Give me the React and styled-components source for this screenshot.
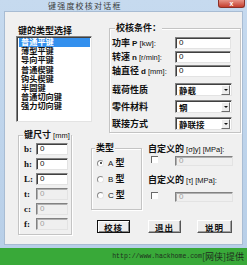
import React from "react";
import styled, { createGlobalStyle } from "styled-components";

const GlobalStyle = createGlobalStyle`
  html, body {
    margin: 0;
    padding: 0;
    background: #ffffff;
  }
  body {
    font-family: "Noto Sans CJK SC", "Liberation Sans", sans-serif;
  }
  * {
    box-sizing: border-box;
  }
`;

const Screen = styled.div`
  width: 247px;
  height: 265px;
  display: flex;
  flex-direction: column;
  overflow: hidden;
`;

const Frame = styled.div`
  height: 248px;
  background: linear-gradient(#c6daef, #b8cfe8);
  padding: 0 4px 3px 4px;
  display: flex;
  flex-direction: column;
`;

const TitleBar = styled.div`
  height: 11px;
  display: flex;
  align-items: flex-start;
`;

const Title = styled.div`
  flex: 1;
  padding-left: 44px;
  font-size: 8px;
  line-height: 11px;
  letter-spacing: 1.2px;
  color: #3a3a3a;
`;

const CloseButton = styled.div`
  width: 27px;
  height: 8px;
  margin-right: -2px;
  background: linear-gradient(#e79488, #c43e2e);
  border: 1px solid #8c3026;
  border-top: none;
  border-radius: 0 0 3px 3px;
  display: flex;
  align-items: center;
  justify-content: center;
  color: #ffffff;
  font-family: "Liberation Sans", sans-serif;
  font-size: 7px;
  font-weight: bold;
  line-height: 7px;
`;

const Body = styled.div`
  flex: 1;
  background: #f0f0f0;
  border: 1px solid #a8bcd3;
  padding: 13px 0 0 11px;
  display: flex;
  flex-direction: column;
`;

const TopRow = styled.div`
  display: flex;
  align-items: flex-start;
`;

const LeftColumn = styled.div`
  width: 76px;
  display: flex;
  flex-direction: column;
`;

const Caption = styled.div`
  font-size: 9px;
  font-weight: bold;
  line-height: 11px;
  color: #111;
  margin-left: ${(p) => p.$indent || 0}px;
  margin-top: ${(p) => p.$top || 0}px;
  white-space: nowrap;
`;

const Latin = styled.span`
  font-family: "Liberation Sans", sans-serif;
  font-size: ${(p) => p.$size || 8}px;
  font-weight: ${(p) => (p.$light ? "normal" : "bold")};
`;

const ListBox = styled.div`
  height: 86px;
  background: #ffffff;
  border: 1px solid;
  border-color: #828282 #e3e3e3 #e3e3e3 #828282;
  box-shadow: inset 1px 1px 0 #404040;
  padding: 1px 1px 1px 2px;
`;

const ListItem = styled.div`
  height: 9.2px;
  line-height: 9.2px;
  padding-left: 2px;
  font-family: "Liberation Sans", "Noto Sans CJK SC", sans-serif;
  font-size: 8.2px;
  font-weight: bold;
  color: ${(p) => (p.$selected ? "#ffffff" : "#111")};
  background: ${(p) => (p.$selected ? "#3390ee" : "transparent")};
  white-space: nowrap;
`;

const Group = styled.div`
  position: relative;
  width: ${(p) => p.$w}px;
  height: ${(p) => (p.$h ? `${p.$h}px` : "auto")};
  margin-left: ${(p) => p.$ml || 0}px;
  margin-top: ${(p) => p.$mt || 0}px;
  border: 1px solid #c4c4c4;
  box-shadow: inset 1px 1px 0 #ffffff, 1px 1px 0 #ffffff;
  padding: ${(p) => p.$pad};
  display: flex;
  flex-direction: column;
  align-self: start;
`;

const Legend = styled.div`
  position: absolute;
  top: -7px;
  left: ${(p) => p.$left || 4}px;
  padding: 0 1px;
  background: #f0f0f0;
  font-size: 9px;
  font-weight: bold;
  line-height: 11px;
  color: #111;
  white-space: nowrap;
`;

const FieldRow = styled.div`
  display: flex;
  align-items: center;
  height: ${(p) => p.$h}px;
  margin-top: ${(p) => p.$mt || 0}px;
`;

const FieldLabel = styled.div`
  width: ${(p) => p.$w}px;
  font-size: 9px;
  font-weight: bold;
  color: #111;
  white-space: nowrap;
  line-height: 11px;
`;

const LetterLabel = styled.div`
  width: ${(p) => p.$w}px;
  font-family: "Liberation Serif", serif;
  font-size: 9px;
  font-weight: bold;
  color: #111;
`;

const TextBox = styled.div`
  width: ${(p) => p.$w}px;
  height: ${(p) => p.$h || 12}px;
  margin-left: ${(p) => p.$ml || 0}px;
  background: ${(p) => (p.$disabled ? "#efefef" : "#ffffff")};
  border: 1px solid;
  border-color: #828282 #e3e3e3 #e3e3e3 #828282;
  box-shadow: inset 1px 1px 0 ${(p) => (p.$disabled ? "#b0b0b0" : "#404040")};
  padding-left: 3px;
  font-family: "Liberation Sans", sans-serif;
  font-size: 8px;
  line-height: ${(p) => (p.$h || 12) - 2}px;
  color: ${(p) => (p.$disabled ? "#a0a0a0" : "#111")};
`;

const SelectBox = styled.div`
  width: 57px;
  height: 13px;
  background: #ffffff;
  border: 1px solid;
  border-color: #828282 #e3e3e3 #e3e3e3 #828282;
  box-shadow: inset 1px 1px 0 #404040;
  display: flex;
  align-items: stretch;
  justify-content: space-between;
  padding: 1px 1px 0 3px;
`;

const SelectText = styled.span`
  font-size: 8.5px;
  font-weight: bold;
  line-height: 10px;
  color: #111;
`;

const ArrowButton = styled.div`
  width: 9px;
  height: 10px;
  background: #ececec;
  border: 1px solid;
  border-color: #ffffff #6c6c6c #6c6c6c #ffffff;
  display: flex;
  align-items: center;
  justify-content: center;
  &::after {
    content: "";
    border-left: 2px solid transparent;
    border-right: 2px solid transparent;
    border-top: 2px solid #111;
  }
`;

const BottomGrid = styled.div`
  display: grid;
  grid-template-columns: 73px 57px 85px;
  grid-template-rows: 79px 13px;
  row-gap: 6px;
  margin: 2px 0 0 2px;
`;

const SizeGroup = styled(Group)`
  grid-row: 1 / 3;
  gap: 3px;
`;

const RadioRow = styled.div`
  display: flex;
  align-items: center;
  height: 16px;
  gap: 4px;
`;

const RadioDot = styled.div`
  width: 7px;
  height: 7px;
  border-radius: 50%;
  background: #ffffff;
  border: 1px solid;
  border-color: #8a8a8a #e6e6e6 #e6e6e6 #8a8a8a;
  display: flex;
  align-items: center;
  justify-content: center;
  &::after {
    content: "";
    width: 2px;
    height: 2px;
    border-radius: 50%;
    background: ${(p) => (p.$checked ? "#222" : "transparent")};
  }
`;

const RadioText = styled.span`
  font-size: 9px;
  font-weight: bold;
  color: #111;
  line-height: 11px;
`;

const CustomColumn = styled.div`
  display: flex;
  flex-direction: column;
  padding-top: 8px;
`;

const CheckRow = styled.div`
  display: flex;
  align-items: center;
  height: 10px;
  margin-top: ${(p) => p.$mt || 0}px;
`;

const CheckBox = styled.div`
  width: 7px;
  height: 7px;
  margin-left: 3px;
  margin-top: -3px;
  background: #ffffff;
  border-top: 1px solid #6a6a6a;
  border-left: 1px solid #6a6a6a;
`;

const ButtonCell = styled.div`
  display: flex;
  justify-content: ${(p) => p.$justify || "flex-start"};
  padding-left: ${(p) => p.$pl || 0}px;
  padding-right: ${(p) => p.$pr || 0}px;
`;

const Button = styled.div`
  width: ${(p) => p.$w}px;
  height: 13px;
  background: #ececec;
  border: 1px solid;
  border-color: ${(p) =>
    p.$focused ? "#111 #111 #111 #111" : "#ffffff #555 #555 #ffffff"};
  box-shadow: ${(p) =>
    p.$focused ? "inset 1px 1px 0 #fff, inset -1px -1px 0 #888" : "inset -1px -1px 0 #a0a0a0"};
  display: flex;
  align-items: center;
  justify-content: center;
  font-size: 8.5px;
  font-weight: bold;
  color: #111;
  letter-spacing: 1px;
`;

const Footer = styled.div`
  flex: 1;
  background: #39a939;
  display: flex;
  align-items: center;
  justify-content: flex-end;
  padding-right: 3px;
  color: #1e2e1e;
  white-space: nowrap;
`;

const FooterUrl = styled.span`
  font-family: "Liberation Mono", monospace;
  font-size: 6.5px;
`;

const FooterCjk = styled.span`
  font-size: 9px;
`;

const keyTypes = [
  "普通平键",
  "薄型平键",
  "导向平键",
  "普通楔键",
  "钩头楔键",
  "半圆键",
  "普通切向键",
  "强力切向键",
];

const sizes = [
  { name: "b:", disabled: false },
  { name: "h:", disabled: false },
  { name: "L:", disabled: false },
  { name: "t:", disabled: true },
  { name: "c:", disabled: true },
  { name: "f:", disabled: true },
];

export default function App() {
  return (
    <Screen>
      <GlobalStyle />
      <Frame>
        <TitleBar>
          <Title>键强度校核对话框</Title>
          <CloseButton>x</CloseButton>
        </TitleBar>
        <Body>
          <TopRow>
            <LeftColumn>
              <Caption $indent={2}>键的类型选择</Caption>
              <ListBox>
                {keyTypes.map((t, i) => (
                  <ListItem key={t} $selected={i === 0}>
                    {t}
                  </ListItem>
                ))}
              </ListBox>
            </LeftColumn>
            <Group $w={132} $ml={17} $mt={3} $pad="8px 0 2px 2px">
              <Legend $left={5}>校核条件：</Legend>
              <FieldRow $h={12}>
                <FieldLabel $w={63}>
                  功率 <Latin>P</Latin> <Latin $light>[kw]:</Latin>
                </FieldLabel>
                <TextBox $w={56}>0</TextBox>
              </FieldRow>
              <FieldRow $h={12} $mt={2}>
                <FieldLabel $w={63}>
                  转速 <Latin>n</Latin> <Latin $light $size={7.5}>[r/min]:</Latin>
                </FieldLabel>
                <TextBox $w={56}>0</TextBox>
              </FieldRow>
              <FieldRow $h={12} $mt={2}>
                <FieldLabel $w={63}>
                  轴直径 <Latin>d</Latin> <Latin $light $size={7.5}>[mm]:</Latin>
                </FieldLabel>
                <TextBox $w={56}>0</TextBox>
              </FieldRow>
              <FieldRow $h={13} $mt={6}>
                <FieldLabel $w={63}>载荷性质</FieldLabel>
                <SelectBox>
                  <SelectText>静载</SelectText>
                  <ArrowButton />
                </SelectBox>
              </FieldRow>
              <FieldRow $h={13} $mt={4}>
                <FieldLabel $w={63}>零件材料</FieldLabel>
                <SelectBox>
                  <SelectText>钢</SelectText>
                  <ArrowButton />
                </SelectBox>
              </FieldRow>
              <FieldRow $h={13} $mt={4}>
                <FieldLabel $w={63}>联接方式</FieldLabel>
                <SelectBox>
                  <SelectText>静联接</SelectText>
                  <ArrowButton />
                </SelectBox>
              </FieldRow>
            </Group>
          </TopRow>

          <BottomGrid>
            <SizeGroup $w={54} $h={100} $pad="7px 0 0 5px">
              <Legend $left={4}>
                键尺寸 <Latin $light $size={7.5}>[mm]</Latin>
              </Legend>
              {sizes.map((s) => (
                <FieldRow key={s.name} $h={12}>
                  <LetterLabel $w={12}>{s.name}</LetterLabel>
                  <TextBox $w={32} $disabled={s.disabled}>
                    0
                  </TextBox>
                </FieldRow>
              ))}
            </SizeGroup>

            <Group $w={51} $h={62} $mt={13} $pad="6px 0 0 5px">
              <Legend $left={3}>类型</Legend>
              <RadioRow>
                <RadioDot $checked />
                <RadioText>
                  <Latin $light>A</Latin> 型
                </RadioText>
              </RadioRow>
              <RadioRow>
                <RadioDot />
                <RadioText>
                  <Latin $light>B</Latin> 型
                </RadioText>
              </RadioRow>
              <RadioRow>
                <RadioDot />
                <RadioText>
                  <Latin $light>C</Latin> 型
                </RadioText>
              </RadioRow>
            </Group>

            <CustomColumn>
              <Caption>
                自定义的 <Latin $light $size={7.5}>[σ]y] [MPa]:</Latin>
              </Caption>
              <CheckRow $mt={1}>
                <CheckBox />
                <TextBox $w={58} $h={10} $ml={17} $disabled>
                  0
                </TextBox>
              </CheckRow>
              <Caption $top={8}>
                自定义的 <Latin $light $size={7.5}>[τ] [MPa]:</Latin>
              </Caption>
              <CheckRow $mt={6}>
                <CheckBox />
                <TextBox $w={58} $h={10} $ml={17} $disabled>
                  0
                </TextBox>
              </CheckRow>
            </CustomColumn>

            <ButtonCell $pl={6}>
              <Button $w={33} $focused>
                校核
              </Button>
            </ButtonCell>
            <ButtonCell $justify="space-between" $pr={1}>
              <Button $w={33}>退出</Button>
              <Button $w={35}>说明</Button>
            </ButtonCell>
          </BottomGrid>
        </Body>
      </Frame>
      <Footer>
        <FooterUrl>http://www.hackhome.com</FooterUrl>
        <FooterCjk>[网侠]提供</FooterCjk>
      </Footer>
    </Screen>
  );
}
